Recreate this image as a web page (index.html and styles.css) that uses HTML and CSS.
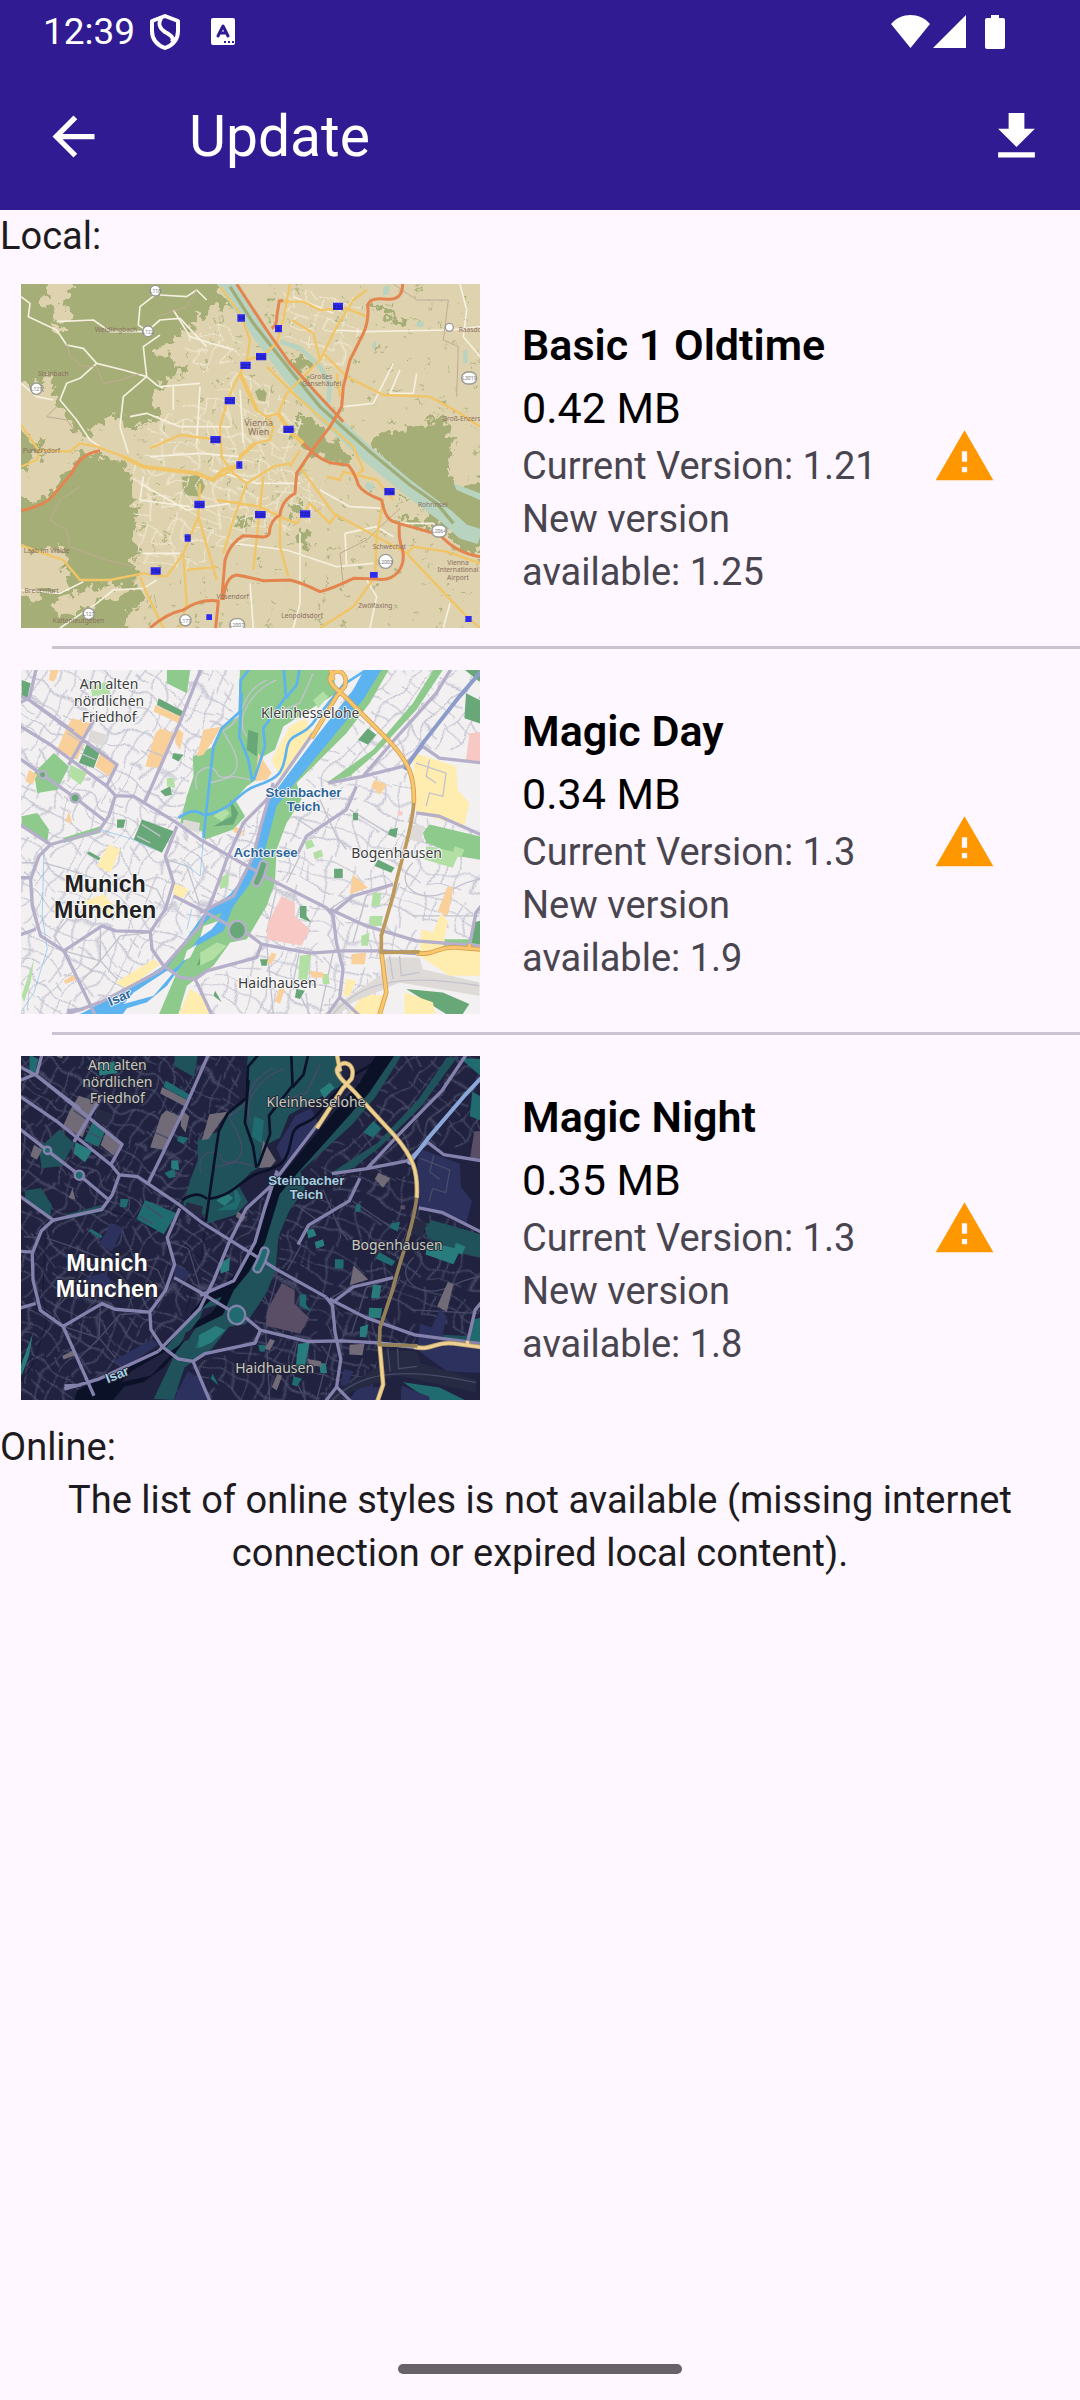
FILE: index.html
```html
<!DOCTYPE html>
<html lang="en">
  <head>
    <meta charset="UTF-8" />
    <meta name="viewport" content="width=device-width, initial-scale=1" />
    <title>Update</title>
    <link rel="stylesheet" href="styles.css">
  </head>
  <body>
    <header class="top">
      <!-- Status bar -->
      <div class="status-bar">
        <div class="status-left">
          <span class="clock">12:39</span>
          <svg class="status-shield" viewBox="0 0 30 36" aria-hidden="true">
            <path d="M15 2 L28 7 V17 C28 25 23 31 15 34 C7 31 2 25 2 17 V7 Z M11 4 C8 10 9 14 15 18 C22 22 24 24 22 28" />
          </svg>
          <svg class="status-app" viewBox="0 0 24 27" aria-hidden="true">
            <rect width="24" height="27" rx="2" fill="#fff" />
            <path d="M7 18 L12 8 L17 18 M9 15 H15" fill="none" stroke="#311b92" stroke-width="3" stroke-linecap="round" stroke-linejoin="round" />
            <path d="M13 23h2v2h-2z M17 23h2v2h-2z M21 23h2v2h-2z" fill="#311b92" />
          </svg>
        </div>
        <div class="status-right">
          <svg class="status-wifi" viewBox="0 0 39 33" aria-hidden="true">
            <path d="M0 9 C10 -3 29 -3 39 9 L19.500 33 Z" />
          </svg>
          <svg class="status-signal" viewBox="0 0 33 33" aria-hidden="true">
            <path d="M33 0 V33 H0 Z" />
          </svg>
          <svg class="status-battery" viewBox="0 0 20 34" aria-hidden="true">
            <path d="M6 0 H14 V3 H18 Q20 3 20 5 V32 Q20 34 18 34 H2 Q0 34 0 32 V5 Q0 3 2 3 H6 Z" />
          </svg>
        </div>
      </div>

      <!-- App bar -->
      <div class="app-bar">
        <button class="icon-button" type="button" aria-label="Back">
          <svg class="icon" viewBox="0 0 24 24" aria-hidden="true">
            <path d="M20 11H7.830l5.590-5.590L12 4l-8 8 8 8 1.410-1.410L7.830 13H20v-2z" />
          </svg>
        </button>
        <h1>Update</h1>
        <button class="icon-button" type="button" aria-label="Download all">
          <svg class="icon" viewBox="0 0 24 24" aria-hidden="true">
            <path d="M19 9h-4V3H9v6H5l7 7 7-7zM5 18v2h14v-2H5z" />
          </svg>
        </button>
      </div>
    </header>

    <main>
      <h2 class="section-title">Local:</h2>
      <ul class="style-list">
        <!-- Basic 1 Oldtime -->
        <li class="style-item">
          <svg class="map map-old" viewBox="63 42 1377 1032" role="img" aria-label="Map of Vienna">
            <defs>
              <pattern id="lanes" width="94" height="78" patternUnits="userSpaceOnUse" patternTransform="rotate(12)">
                <path d="M0 20 H60 L94 32 M22 0 V44 L30 78 M60 20 V58 H94 M0 60 H26" />
              </pattern>
              <pattern id="groves" width="170" height="130" patternUnits="userSpaceOnUse" patternTransform="rotate(-20)">
                <path d="M20 20h14v5h-14z M90 40h5v16h-5z M130 90h18v6h-18z M50 100h8v8h-8z M150 20h6v6h-6z M70 70h5v5h-5z" />
              </pattern>
              <!-- Roughens straight edges -->
              <filter id="ragged" x="0" y="0" width="1" height="1" color-interpolation-filters="sRGB">
                <feTurbulence type="fractalNoise" baseFrequency=".035" numOctaves="3" seed="4" />
                <feDisplacementMap in="SourceGraphic" scale="70" xChannelSelector="R" yChannelSelector="G" />
              </filter>
              <filter id="bent" x="0" y="0" width="1" height="1" color-interpolation-filters="sRGB">
                <feTurbulence type="fractalNoise" baseFrequency=".008" numOctaves="2" seed="9" />
                <feDisplacementMap in="SourceGraphic" scale="90" xChannelSelector="R" yChannelSelector="G" />
              </filter>
            </defs>
            <rect class="land" x="63" y="42" width="1377" height="1032" />
            <g filter="url(#ragged)">
              <path class="forest" d="M20 0 H120 L140 70 128 95 175 120 205 135 200 80 225 42 V0 H640 L655 70 690 95 680 120 640 105 610 130 575 165 540 175 545 205 500 220 470 240 480 260 530 265 525 295 560 290 540 320 480 330 490 355 460 370 455 405 480 430 470 455 400 465 375 480 365 440 340 425 320 460 280 470 265 500 225 490 190 430 160 400 155 320 145 300 130 350 100 340 20 345 Z" />
              <path class="forest" d="M20 480 L63 480 90 510 120 520 115 550 180 560 230 540 290 560 380 575 370 600 395 620 385 660 410 700 400 720 410 760 400 800 410 850 395 880 420 910 400 950 440 975 420 1000 390 1020 360 1120 H20 V985 L100 990 130 960 210 950 215 920 190 890 200 840 150 830 110 840 20 820 V700 L130 690 120 660 90 640 85 600 20 590 Z" />
              <path class="land" d="M20 715 L140 690 190 620 225 580 240 545 200 545 115 560 85 590 90 650 100 700 Z M170 110 L205 125 210 150 175 185 150 150 Z M160 1000 L235 960 340 945 400 950 360 975 290 990 270 1020 180 1040 Z" />
              <path class="forest" d="M1160 480 L1190 490 1210 475 1240 480 1270 455 1310 445 1345 460 1355 540 1340 600 1370 640 1500 640 V850 L1380 830 1330 780 1290 760 1270 700 1200 620 1150 570 1110 530 Z M890 440 L940 450 975 480 1000 520 1050 560 1045 585 990 575 930 540 880 500 Z M865 270 L900 255 935 275 915 300 885 295 Z M890 790 L920 785 935 830 905 840 Z M1110 90 L1150 110 1210 160 1190 165 1120 110 Z M705 740 L750 735 755 765 715 770 Z M870 700 L910 690 905 730 880 740 Z M1195 680 L1230 690 1215 705 Z M1180 740 L1260 750 1310 790 1270 780 Z" />
              <rect fill="url(#groves)" x="400" y="42" width="1040" height="1032" />
            </g>
            <path class="forest" d="M545 620 L600 615 615 650 600 680 550 675 Z M765 365 L785 350 800 370 795 395 775 390 Z" />
            <g class="lanes" filter="url(#bent)">
              <path d="M470 440 L640 380 700 330 800 340 900 440 880 560 980 640 960 740 800 800 660 850 540 900 430 870 400 740 400 600 450 540 Z" />
              <path d="M560 180 L690 150 740 240 700 300 560 300 Z M840 60 L1100 60 1080 200 1010 300 930 230 850 200 Z" />
            </g>
            <path class="minor" d="M63 80 L90 100 85 140 170 180 200 225 250 235 290 280 240 325 200 340 180 390 230 450 270 510 300 530 M290 280 L370 300 440 320 470 345 490 355 M445 185 L415 165 420 110 465 75 M170 155 L280 150 330 185 440 185 M440 185 L480 150 540 145 620 230 M63 340 L110 380 160 390 M360 470 L370 380 440 320 430 230 480 195 M360 470 L385 550 M480 75 L560 80 590 60 620 90 M63 960 L180 970 250 935 M180 1074 L290 1000 340 960 430 955 470 930" />
            <path class="minor" d="M390 440 L440 430 540 470 690 470 M450 560 L600 550 720 560 M420 640 L560 720 690 700 M720 360 L730 520 M600 350 L590 520 M640 600 L770 640 900 640 M960 660 L1050 710 1150 715 M700 820 L860 840 1010 890 1120 880 M900 790 L900 1000 880 1074 M750 940 L760 1074 M1100 930 L1130 980 1110 1074 M1000 180 L1100 185 1350 180 1440 170 M1380 42 L1400 120 1390 200 1440 260 M1200 300 L1170 370 1240 370 1250 310 M1030 410 L1120 400 1180 280 M880 80 L1000 130 M1350 1000 L1330 1074 M1040 890 L1035 790 1130 770 1180 800 M1180 760 L1300 760 1320 790 M430 850 L540 850 M430 620 L420 690 570 710 M520 120 L570 200 700 240 M520 350 L520 420 M480 350 L600 340" />
            <path class="border-line" d="M590 60 L560 110 470 140 M200 220 L210 260 250 290 290 290 310 340 360 330 420 310 M180 400 L140 440 200 450 230 490 M240 650 L180 690 150 750 200 780 210 830 320 870 400 890 M1180 42 L1250 90 1345 90 1330 210 1375 230 1370 380 M1020 850 L1030 950 M1200 715 L1100 810 1020 850" />

            <!-- Danube -->
            <path class="danube" d="M670 30 L750 150 860 300 960 420 1100 550 1220 650 1340 740 1390 785 1440 800" />
            <path class="danube-island" d="M690 50 L760 160 870 300 960 410 1110 545 1230 645 1310 700 1360 760" />
            <path class="danube-arm" d="M840 215 L900 235 960 290 990 340 985 400" />
            <path class="water" d="M1150 50 L1170 45 1165 75 1150 75 Z M1115 225 L1125 210 1130 220 1120 240 Z M1100 635 L1125 645 1110 665 1095 650 Z M1250 155 h20 v15 h-20 Z M1390 240 h12 v40 h-12 Z M1360 640 L1440 670 1440 690 1370 660 Z" />

            <!-- Main roads -->
            <path class="major" d="M660 50 L720 130 750 210 740 270 720 310 750 370 770 420 800 440 835 430 M720 310 L700 350 680 400 660 470 665 560 700 610 740 640 820 590 870 580 M740 270 L790 255 830 220 850 150 870 42 M835 430 L860 370 960 270 1010 170 1060 90 1100 60 M960 270 L940 190 875 150 M850 95 L910 95 960 120 1040 115 1100 140 M970 250 L1040 320 1150 375 1290 380 1380 430 1440 470 M800 290 L880 370 1060 530 1090 600 1060 620 M63 465 L115 540 210 545 240 520 290 530 370 560 M450 535 L540 495 660 510 M800 440 L820 470 810 510 765 520 720 560 715 590 660 620 M600 640 L595 740 550 850 500 920 430 910 M595 740 L650 930 M650 690 L780 710 840 740 890 760 930 700 990 760 1010 730 M780 710 L790 620 M780 710 L760 900 M740 640 L700 750 670 850 M840 740 L840 830 865 920 M560 900 L650 890 M550 850 L560 1000 540 1074 M420 920 L440 970 490 1074 M63 825 L130 850 190 870 240 930 330 930 430 910 M900 590 L1000 730 1130 800 1220 850 1400 1040 1440 1074 M1220 850 L1240 830 1340 845 1440 880 M1150 690 L1130 800 1125 920 1060 1010 960 1074 M63 590 L110 570 120 540 M900 540 L870 590 M980 620 L1020 630 1030 605 1130 630 1180 690 M1020 380 L1010 310" />
            <path class="major major-wide" d="M370 560 L430 590 590 610 640 630 670 600 720 585 M835 430 L865 480 910 520 M720 310 L770 420 M765 520 L720 560" />
            <path class="motorway" d="M710 42 L800 180 870 280 950 370 1030 455 M1208 42 Q1208 90 1165 88 Q1110 80 1103 105 Q1108 150 1090 190 L1050 270 1030 350 1025 410 990 470 930 550 890 610 885 670 Q845 690 840 735 Q810 750 808 790 Q805 800 790 801 L730 797 Q690 820 675 870 L665 990 M910 520 Q950 565 990 578 L1045 586 Q1065 610 1075 645 Q1090 670 1145 690 Q1155 750 1185 757 L1250 775 1320 795 Q1370 850 1440 860 M1198 765 Q1195 810 1208 840 Q1215 880 1195 905 Q1170 935 1130 927 L1060 925 Q1000 955 960 965 Q910 940 870 930 L790 932 Q740 920 710 915 Q675 920 670 990 M450 1074 Q500 1030 550 1020 Q600 985 655 993 L647 1074 M63 722 Q140 705 160 675 L215 610 Q240 550 300 542 M815 175 Q832 165 830 140 L838 92 850 92" />

            <g class="shield">
              <circle cx="466" cy="62" r="16" /><circle cx="444" cy="184" r="16" />
              <circle cx="109" cy="356" r="17" /><circle cx="1348" cy="172" r="12" />
              <rect x="1385" y="306" width="45" height="36" rx="18" />
              <rect x="1295" y="765" width="45" height="36" rx="18" />
              <circle cx="1157" cy="874" r="21" /><circle cx="266" cy="1031" r="17" />
              <circle cx="556" cy="1051" r="17" />
              <rect x="689" y="1046" width="45" height="36" rx="18" />
            </g>
            <g class="shield-text">
              <text x="466" y="69">L118</text><text x="444" y="191">L122</text>
              <text x="109" y="363">L121</text><text x="1408" y="331">L3019</text>
              <text x="1317" y="790">L2064</text><text x="1157" y="881">L2003</text>
              <text x="266" y="1038">L127</text><text x="556" y="1058">L177</text>
              <text x="711" y="1071">L2007</text>
            </g>
            <path class="badge" d="M712 133h23v22h-23z M825 165h21v22h-21z M999 98h30v22h-30z M768 249h31v22h-31z M721 275h31v22h-31z M674 381h31v22h-31z M850 467h31v22h-31z M631 498h31v22h-31z M709 574h18v22h-18z M583 692h31v23h-31z M765 723h32v22h-32z M900 721h31v22h-31z M1153 654h31v22h-31z M554 793h18v22h-18z M452 892h30v22h-30z M1110 906h23v17h-23z M619 1033h17v17h-17z M1396 1038h19v18h-19z" />
            <g class="badge-text">
              <text x="724" y="151">14</text><text x="835" y="183">3</text><text x="1014" y="116">226</text>
              <text x="783" y="267">226</text><text x="737" y="293">227</text><text x="689" y="399">221</text>
              <text x="865" y="485">227</text><text x="646" y="516">223</text><text x="718" y="592">1</text>
              <text x="598" y="711">224</text><text x="781" y="741">230</text><text x="915" y="739">225</text>
              <text x="1168" y="672">14a</text><text x="563" y="811">12</text><text x="467" y="910">13a</text>
            </g>
            <g class="old-label">
              <text x="348" y="185">Weidlingbach</text>
              <text x="160" y="317">Steinbach</text>
              <text x="124" y="550">Purkersdorf</text>
              <text x="140" y="849">Laab im Walde</text>
              <text x="125" y="968">Breitenfurt</text>
              <text x="236" y="1060">Kaltenleutgeben</text>
              <text x="963" y="328">Großes</text>
              <text x="965" y="348">Gänsehäufel</text>
              <text x="1418" y="186">Raasdorf</text>
              <text x="1404" y="452">Groß-Enzersdorf</text>
              <text x="1298" y="712">Rohrinsel</text>
              <text x="1168" y="836">Schwechat</text>
              <text x="1374" y="884">Vienna</text>
              <text x="1374" y="907">International</text>
              <text x="1374" y="929">Airport</text>
              <text x="1126" y="1013">Zwölfaxing</text>
              <text x="906" y="1043">Leopoldsdorf</text>
              <text x="698" y="988">Vösendorf</text>
            </g>
            <g class="old-city">
              <text x="776" y="467">Vienna</text>
              <text x="776" y="494">Wien</text>
            </g>
          </svg>
          <div class="style-info">
            <h3>Basic 1 Oldtime</h3>
            <p class="size">0.42 MB</p>
            <p class="version">Current Version: 1.21</p>
            <p class="version">New version available: 1.25</p>
          </div>
          <button class="update-button" type="button" aria-label="Update Basic 1 Oldtime">
            <svg class="icon" viewBox="0 0 24 24" aria-hidden="true">
              <path d="M1 21h22L12 2 1 21zm12-3h-2v-2h2v2zm0-4h-2v-4h2v4z" />
            </svg>
          </button>
        </li>

        <!-- Magic Day -->
        <li class="style-item">
          <svg class="map map-day" viewBox="63 60 1377 1035" role="img" aria-label="Day map of Munich">
            <defs>
              <pattern id="grid-west" width="130" height="112" patternUnits="userSpaceOnUse" patternTransform="rotate(31)">
                <path d="M0 14 H130 M0 58 H74 L130 68 M0 92 H50 M18 0 V112 M60 14 V112 M100 0 V64 M100 64 L112 112" />
              </pattern>
              <pattern id="grid-east" width="124" height="140" patternUnits="userSpaceOnUse" patternTransform="rotate(18)">
                <path d="M0 20 H80 L124 34 M0 68 H124 M0 108 H58 M24 0 V68 L34 140 M78 0 V108 H124 M104 34 V108" />
              </pattern>
              <pattern id="grid-north" width="116" height="96" patternUnits="userSpaceOnUse" patternTransform="rotate(-48)">
                <path d="M0 14 H116 M0 56 H116 M20 0 V56 M66 14 V96 M96 56 V96" />
              </pattern>

              <!-- Munich, drawn once and coloured by the map it is used in -->
              <g id="munich">
                <rect class="m-land" x="0" y="0" width="1500" height="1160" />
                <g class="m-streets" filter="url(#bent)">
                  <path fill="url(#grid-west)" d="M0 0 H730 L700 220 640 290 575 330 550 490 640 560 760 480 800 500 740 680 560 880 500 950 250 1160 H0 Z" />
                  <path fill="url(#grid-north)" d="M1130 0 H1500 V330 L1250 290 1200 350 940 420 900 390 Z" />
                  <path fill="url(#grid-east)" d="M900 450 L1080 390 1230 360 1240 480 1500 560 V900 L1150 920 780 880 740 860 820 700 830 580 Z M590 990 L780 890 1140 920 1150 1160 H500 Z" />
                </g>
                <path class="m-lanes" d="M63 640 L110 640 M130 640 L200 660 290 690 M190 905 L160 860 210 800 M190 905 L300 935 360 860 450 850 M300 935 L240 1000 M300 935 L300 830 M300 935 L350 990 M500 630 L560 650 600 770 M420 700 L470 720 500 780 M960 450 L1010 560 1040 600 M900 620 L860 700 M1050 480 L1180 560 M1240 640 C1190 690 1230 740 1290 740 S1370 700 1440 690 M1200 700 L1140 860 M1060 880 L1100 740 1170 710 M1240 800 L1440 800 M940 540 L880 500 M990 780 L1050 740 1170 710 M830 720 L800 850 M870 760 L880 890 M900 900 L880 1000 930 1095 M800 880 L820 1095 M1000 910 L960 1095" />

                <!-- Areas -->
                <path class="m-park" d="M722 30 H995 L1010 130 960 160 850 230 825 300 790 320 770 390 740 410 705 450 735 500 700 540 615 570 605 545 540 520 560 440 580 380 578 320 640 290 665 230 715 200 718 95 Z" />
                <path class="m-park" d="M1130 20 H1190 L1110 160 1040 250 950 340 890 400 905 450 860 520 830 600 825 700 800 770 740 870 690 880 640 950 560 1010 530 1110 470 1110 560 900 690 740 760 640 800 480 870 390 1000 220 Z" />
                <path class="m-park" d="M1270 550 L1290 525 1440 560 1500 580 V640 L1380 620 1280 580 Z M100 370 L160 310 205 350 170 420 110 430 Z M63 500 L110 490 145 540 140 580 63 525 Z M190 565 L300 530 300 550 190 580 Z M500 60 H570 L560 130 500 100 Z M1320 30 H1350 L1250 180 1130 310 1050 380 980 400 1120 300 1240 160 Z M1335 870 H1440 V890 H1335 Z" />
                <path class="m-wood" d="M425 510 L520 545 485 610 400 570 Z M235 340 L260 280 300 300 280 355 Z M475 145 L550 185 540 200 470 165 Z M1400 130 L1500 180 V240 L1395 205 Z M1360 30 H1470 L1440 95 Z M1075 270 L1105 235 1130 255 1105 285 Z M745 240 L775 250 770 320 740 300 Z M640 530 L695 500 690 450 715 490 700 525 Z M1220 1020 L1330 1030 1410 1065 1390 1095 1340 1095 Z M1420 820 L1500 800 V900 L1415 880 Z M1135 630 L1185 655 1175 670 1125 650 Z M63 90 L90 100 80 145 63 145 Z M1003 658 h26 v28 h-26 Z M1170 540 L1195 535 1190 565 1165 555 Z M520 310 L550 315 535 335 515 325 Z M480 425 L510 410 515 435 495 440 Z M595 850 L620 845 605 875 585 875 Z M520 940 L575 880 560 930 530 960 Z M610 900 L620 940 590 950 Z M780 930 L805 930 800 950 785 950 Z M645 1025 L665 1060 640 1040 Z M890 1020 L915 1025 900 1050 885 1045 Z M900 770 L920 770 920 800 935 820 900 805 Z M1060 490 h15 v22 h-15 Z M350 510 l25 0 -5 25 -20 0 Z M265 605 l35 20 -5 8 -35 -20 Z" />
                <path class="m-lawn" d="M270 110 L320 95 330 130 275 140 Z M210 345 L260 370 240 405 205 380 Z M940 150 L970 125 985 140 955 175 Z M640 500 L670 475 690 490 665 515 Z M915 575 L935 570 945 590 920 600 Z M940 610 L965 600 970 620 945 630 Z M1280 590 L1380 610 1360 655 1275 630 Z M1365 590 L1395 600 1385 625 1360 615 Z M900 920 L935 915 920 1000 895 990 Z M1085 860 L1110 850 1105 890 1085 890 Z M1110 800 L1150 800 1145 830 1110 830 Z M1120 730 L1145 730 1140 770 1115 770 Z M63 1040 L100 930 90 1000 70 1060 Z M655 690 L685 670 685 710 660 720 Z M500 385 L520 385 525 415 500 410 Z M965 975 l20 0 5 30 -20 0 Z M600 910 L650 880 680 890 640 930 600 950 Z" />
                <path class="m-yellow" d="M1245 310 L1370 350 1375 420 1410 460 1395 530 1250 490 1240 400 Z M870 230 L915 205 940 250 880 340 840 380 815 330 Z M325 585 L360 600 330 670 290 650 Z M1265 840 L1300 850 1325 790 1345 815 1330 895 1500 905 V980 L1350 980 1260 920 Z M345 1000 L460 930 480 945 380 1020 Z M570 1020 L620 1050 640 1110 530 1110 Z M1090 1035 L1155 1040 1140 1110 1040 1110 Z M1215 1030 L1300 1060 1310 1110 1215 1110 Z M1040 990 L1070 995 1050 1040 1030 1040 Z M520 700 L565 720 550 745 520 740 Z M240 760 L310 735 340 770 330 800 300 780 Z" />
                <path class="m-orange" d="M190 250 L215 205 270 220 230 330 170 300 Z M300 310 L345 345 325 380 285 350 Z M465 250 L480 235 520 250 480 355 435 350 Z M465 165 L540 200 535 220 460 185 Z M610 240 L665 230 610 315 590 320 Z M150 60 L175 60 160 95 145 90 Z M525 230 L550 250 540 300 525 280 Z M85 360 L110 375 95 405 75 395 Z M775 310 L815 370 800 390 765 395 Z M1125 390 L1162 405 1140 435 1115 410 Z M1060 675 L1105 715 1050 735 Z M1345 710 L1362 715 1345 800 1315 785 Z M1055 915 L1100 910 1095 945 1055 945 Z M815 910 L830 915 815 945 800 940 Z M840 1015 L855 1020 840 1065 825 1055 Z M930 965 L970 970 975 985 935 985 Z M205 485 L215 520 195 515 Z M705 530 L730 545 720 560 700 545 Z M190 995 L225 975 230 990 195 1005 Z" />
                <path class="m-pink" d="M845 740 L885 760 885 800 930 840 905 890 800 870 805 820 Z M1410 250 L1500 240 V340 L1400 330 Z M1195 485 h14 v12 h-14 Z" />
                <path class="m-grey" d="M1230 525 L1275 530 1265 580 1230 570 Z M270 240 L320 255 305 290 265 275 Z M1160 925 H1260 L1270 960 1440 1000 V1040 L1200 1000 1060 1060 1000 1110 H950 L1050 1040 1140 980 Z M550 510 L600 520 595 550 545 535 Z" />
                <path class="m-lanes" d="M410 560 L450 580 M425 525 L480 560 M1250 340 L1340 370 1330 440 1290 430 1280 470 M1290 330 L1280 380 1310 400 M1000 1095 C1080 1000 1200 970 1440 1010 M1170 920 L1180 990 M1200 920 L1205 980 1260 970 M590 420 C570 350 640 340 650 370 S740 380 700 300 660 260 700 220 720 130 800 90 M830 90 C760 120 700 200 740 260 M940 70 L900 160 850 180 M630 400 L700 380 750 390 M240 310 L285 330 M440 300 L490 320 M200 250 L240 275" />

                <!-- Isar and its streams -->
                <path class="m-water" d="M1115 20 L1060 120 950 260 860 380 800 460 770 590 735 680 690 735 610 795 550 880 490 950 380 1020 240 1095 230 1130 H340 L380 1078 440 1060 500 1010 550 940 590 890 670 845 700 770 745 710 790 620 830 470 885 400 980 285 1090 150 1170 20 Z" />
                <path class="m-park" d="M570 865 L630 805 665 790 650 820 600 860 540 945 515 965 500 955 Z" />
                <path class="m-land" d="M400 1030 L500 965 520 970 460 1040 370 1065 Z M610 830 L655 815 635 840 600 865 Z M560 905 L590 885 570 925 550 935 Z" />
                <path class="m-stream" d="M770 30 L722 90 720 185 665 235 640 290 630 380 618 490 610 565 M850 30 L858 140 790 235 795 290 762 390 M905 30 L890 105 858 145 M725 130 L718 260 745 330 757 395 M615 497 C700 480 710 430 765 410 C840 385 850 370 860 300 C870 240 910 270 950 205 L1030 105 1100 60 M535 505 C570 480 590 480 612 497" />
                <path class="m-brook" d="M130 600 L125 800 140 900 100 1030 60 1090 M300 540 L400 570 460 600 M610 565 L600 680 550 640 M575 780 L560 840" />

                <!-- Main roads -->
                <g class="m-road">
                  <path d="M20 205 L150 285 320 410 345 438 400 440 530 520 600 570 760 660 830 700 980 775 M20 120 L85 150 350 345 320 405 M85 150 L120 0 M85 145 L20 175 M85 150 L220 245 M280 210 L205 345 M20 300 L125 375 225 445 315 515 M625 0 L540 215 430 465 M345 438 L325 500 295 545 150 585 115 620 90 690 95 770 120 860 190 905 305 830 345 845 450 848 495 780 520 700 495 620 530 530 M20 500 L150 585 M190 905 L290 1110 M20 870 L105 840 M450 848 L455 900 490 950 540 985 585 990 620 965 770 925 785 885 M20 685 H95 M585 990 L650 1130 M520 740 L600 780 700 835 M480 965 L300 1060 200 1095 M250 1080 L200 1085" />
                  <path d="M480 965 L600 830 640 740 680 630 730 520 800 450 940 250 M600 790 L700 740 760 620 785 520 820 400 M740 850 L785 885 930 912 1030 905 1150 905 1270 915 M980 775 L1000 800 1010 880 1030 960 1020 1045 960 1130 M1020 1045 L1090 1110 M990 780 L1100 830 1250 875 1500 895 M1000 790 L1060 740 1180 705 M985 400 L1090 380 1210 350 1270 290 1320 325 1500 345 M1090 380 L1180 275 1310 130 1390 0 M1250 490 L1320 500 1500 580 M1500 700 L1430 790 1410 890 M890 620 L920 560 1040 480 1070 410" />
                </g>
                <path class="m-roundabout" d="M210 445 a14 14 0 1 0 28 0 a14 14 0 1 0 -28 0 M115 375 a11 11 0 1 0 22 0 a11 11 0 1 0 -22 0 M686 843 a26 28 0 1 0 52 0 a26 28 0 1 0 -52 0 M780 640 a12 12 0 0 1 22 6 L792 680 780 705 a12 12 0 0 1 -22 -8 L770 670 Z" />
                <path class="m-blue-road" d="M1500 0 L1380 140 1270 280 1215 360 M1150 908 L1260 910" />
                <path class="m-motor-case" d="M935 265 L1010 140 1035 110 C1050 60 1000 50 990 85 C990 110 1030 130 1060 165 L1170 275 C1230 340 1245 380 1243 460 M980 0 L1000 90 M1145 905 L1160 1030 1130 1130 M1250 912 C1310 920 1310 890 1370 895 L1500 905 M1410 885 V898" />
                <path class="m-motor" d="M935 265 L1010 140 1035 110 C1050 60 1000 50 990 85 C990 110 1030 130 1060 165 L1170 275 C1230 340 1245 380 1243 460 M980 0 L1000 90 M1145 905 L1160 1030 1130 1130 M1250 912 C1310 920 1310 890 1370 895 L1500 905 M1410 885 V898" />
                <path class="m-tunnel" d="M1243 460 C1235 560 1200 640 1180 740 L1145 860 V910 L1260 908" />
              </g>
            </defs>
            <use href="#munich" />
            <g class="map-label">
              <text x="326" y="116">Am alten</text>
              <text x="326" y="167">nördlichen</text>
              <text x="326" y="217">Friedhof</text>
              <text x="931" y="205">Kleinhesselohe</text>
              <text x="1191" y="627">Bogenhausen</text>
              <text x="832" y="1018">Haidhausen</text>
            </g>
            <g class="map-water-label">
              <text x="911" y="441">Steinbacher</text>
              <text x="911" y="485">Teich</text>
              <text x="797" y="624">Achtersee</text>
              <text x="358" y="1058" transform="rotate(-24 358 1046)">Isar</text>
            </g>
            <g class="map-city">
              <text x="314" y="729">Munich</text>
              <text x="314" y="807">München</text>
            </g>
          </svg>
          <div class="style-info">
            <h3>Magic Day</h3>
            <p class="size">0.34 MB</p>
            <p class="version">Current Version: 1.3</p>
            <p class="version">New version available: 1.9</p>
          </div>
          <button class="update-button" type="button" aria-label="Update Magic Day">
            <svg class="icon" viewBox="0 0 24 24" aria-hidden="true">
              <path d="M1 21h22L12 2 1 21zm12-3h-2v-2h2v2zm0-4h-2v-4h2v4z" />
            </svg>
          </button>
        </li>

        <!-- Magic Night -->
        <li class="style-item">
          <svg class="map map-night" viewBox="63 51 1377 1032" role="img" aria-label="Night map of Munich">
            <g transform="translate(63 51) matrix(.994 .052 -.032 .99 27 -32) translate(-63 -60)">
              <use href="#munich" />
            </g>
            <g class="map-label">
              <text x="352" y="93">Am alten</text>
              <text x="352" y="144">nördlichen</text>
              <text x="352" y="193">Friedhof</text>
              <text x="948" y="205">Kleinhesselohe</text>
              <text x="1191" y="633">Bogenhausen</text>
              <text x="824" y="1003">Haidhausen</text>
            </g>
            <g class="map-water-label">
              <text x="919" y="437">Steinbacher</text>
              <text x="919" y="480">Teich</text>
              <text x="352" y="1020" transform="rotate(-22 352 1008)">Isar</text>
            </g>
            <g class="map-city">
              <text x="321" y="696">Munich</text>
              <text x="321" y="773">München</text>
            </g>
          </svg>
          <div class="style-info">
            <h3>Magic Night</h3>
            <p class="size">0.35 MB</p>
            <p class="version">Current Version: 1.3</p>
            <p class="version">New version available: 1.8</p>
          </div>
          <button class="update-button" type="button" aria-label="Update Magic Night">
            <svg class="icon" viewBox="0 0 24 24" aria-hidden="true">
              <path d="M1 21h22L12 2 1 21zm12-3h-2v-2h2v2zm0-4h-2v-4h2v4z" />
            </svg>
          </button>
        </li>
      </ul>

      <h2 class="section-title">Online:</h2>
      <p class="message">The list of online styles is not available (missing internet connection or expired local content).</p>
    </main>

    <footer class="nav-bar"><div class="nav-handle"></div></footer>
  </body>
</html>
```
FILE: styles.css
```css
* {
  box-sizing: border-box;
}

body {
  margin: 0;
  min-height: 100vh;
  display: flex;
  flex-direction: column;
  font-family: Roboto, sans-serif;
  font-size: 38px;
  line-height: 53px;
  color: #1d1b20;
  background: #fef7ff;
}

h1,
h2,
h3,
p,
ul {
  margin: 0;
  padding: 0;
}

svg {
  display: block;
}

button {
  padding: 0;
  border: none;
  background: none;
  cursor: pointer;
}

/* Header */
.top {
  background: #311b92;
  color: #fff;
}

.status-bar {
  height: 63px;
  padding: 0 75px 0 43px;
  display: flex;
  justify-content: space-between;
  align-items: center;
}

.status-left,
.status-right {
  display: flex;
  align-items: center;
}

.clock {
  font-size: 37px;
  line-height: 63px;
}

.status-shield {
  width: 30px;
  height: 36px;
  margin-left: 15px;
  fill: none;
  stroke: #fff;
  stroke-width: 4;
  stroke-linejoin: round;
}

.status-app {
  width: 24px;
  height: 27px;
  margin-left: 31px;
}

.status-right {
  fill: #fff;
}

.status-wifi {
  width: 39px;
  height: 33px;
}

.status-signal {
  width: 33px;
  height: 33px;
  margin-left: 3px;
}

.status-battery {
  width: 20px;
  height: 34px;
  margin-left: 19px;
}

.app-bar {
  height: 147px;
  padding: 0 32px 0 42px;
  display: flex;
  align-items: center;
}

.app-bar h1 {
  flex: 1;
  margin-left: 84px;
  font-size: 57px;
  font-weight: 400;
  line-height: 74px;
}

.icon {
  width: 63px;
  height: 63px;
}

.icon-button {
  fill: #fff;
}

/* Style list */
main {
  flex: 1;
}

.section-title {
  font-size: 38px;
  font-weight: 400;
}

.style-list {
  list-style: none;
}

.style-item {
  display: flex;
  align-items: center;
  padding: 21px 53px 21px 21px;
}

/* divider starts further in than the thumbnail */
.style-item:not(:last-child) {
  background: linear-gradient(#cac4d0, #cac4d0) 52px 100% / 100% 3px no-repeat;
}

.map {
  flex: 0 0 459px;
  height: 344px;
}

.style-info {
  flex: 1;
  margin: 0 20px 0 42px;
}

.style-info h3,
.size {
  font-size: 43px;
  line-height: 63px;
  color: #000;
}

.style-info h3 {
  font-weight: 600;
}

.version {
  color: #49454f;
}

.update-button {
  flex: 0 0 126px;
  height: 126px;
  display: flex;
  align-items: center;
  justify-content: center;
  fill: #ff9800;
}

.message {
  padding: 0 42px;
  text-align: center;
}

.nav-bar {
  padding: 26px 0;
}

.nav-handle {
  width: 284px;
  height: 10px;
  margin: 0 auto;
  border-radius: 5px;
  background: #666267;
}

/* Vienna map */
.map-old {
  fill: none;
  stroke-linejoin: round;
}

.land {
  fill: #dfd2ae;
}

.forest,
#groves path {
  fill: #a5ae77;
}

#lanes path {
  fill: none;
  stroke: #eee6cf;
  stroke-width: 4;
}

.lanes {
  fill: url(#lanes);
}

.minor {
  stroke: #f5f0df;
  stroke-width: 5;
}

.border-line {
  stroke: #c0ab95;
  stroke-width: 3;
}

.danube {
  stroke: #b8d3c0;
  stroke-width: 46;
}

.danube-island {
  stroke: #a0ad78;
  stroke-width: 10;
}

.danube-arm {
  stroke: #b8d3c0;
  stroke-width: 14;
}

.water {
  fill: #b8d3c0;
}

.major {
  stroke: #f1c566;
  stroke-width: 7;
}

.major-wide {
  stroke-width: 12;
}

.motorway {
  stroke: #e4854f;
  stroke-width: 9;
}

.shield {
  fill: #fff;
  stroke: #9a9a94;
  stroke-width: 4;
}

.shield-text,
.badge-text,
.old-label,
.old-city,
.map-label,
.map-water-label,
.map-city {
  text-anchor: middle;
}

.shield-text {
  font-size: 15px;
  fill: #777;
}

.badge {
  fill: #2e2af2;
}

.badge-text {
  font-size: 17px;
  fill: #17157a;
}

.old-label,
.old-city {
  font-family: "Noto Sans", sans-serif;
  font-size: 20px;
  fill: #8b7163;
}

.old-city {
  font-size: 27px;
}

/* Munich maps */
.map-day {
  --land: #f2f0f1;
  --park: #8dca8c;
  --wood: #68a878;
  --lawn: #b2dfa3;
  --yellow: #ffedb0;
  --orange: #fad09a;
  --pink: #f7c8c4;
  --grey: #dedad7;
  --lane: #c3c3ce;
  --water: #5db3f0;
  --road: #b5afca;
  --blue-road: #8b9ccb;
  --motor: #f9c66e;
  --motor-case: #d3a052;
  --tunnel: #bd9a5c;
  --label: #3a3a3a;
  --halo: #ffffff;
  --water-label: #2c6499;
  --city: #222222;
}

.map-night {
  --land: #20223f;
  --park: #20525b;
  --wood: #1f6b70;
  --lawn: #287c7c;
  --yellow: #2c315d;
  --orange: #716b78;
  --pink: #5a4e66;
  --grey: #272a43;
  --lane: #484b68;
  --water: #0b1228;
  --road: #8481ad;
  --blue-road: #8ba8d9;
  --motor: #efd193;
  --motor-case: #b89d65;
  --tunnel: #94815a;
  --label: #c9c9c4;
  --halo: #20222e;
  --water-label: #a4cfe5;
  --city: #ffffff;
}

#munich {
  fill: none;
  stroke-linejoin: round;
}

.m-land {
  fill: var(--land);
}

#grid-west path,
#grid-east path,
#grid-north path {
  fill: none;
  stroke: #8889a8;
  stroke-width: 4;
  stroke-opacity: 0.4;
}

.m-lanes {
  stroke: var(--lane);
  stroke-width: 4;
}

.m-park {
  fill: var(--park);
}

.m-wood {
  fill: var(--wood);
}

.m-lawn {
  fill: var(--lawn);
}

.m-yellow {
  fill: var(--yellow);
}

.m-orange {
  fill: var(--orange);
}

.m-pink {
  fill: var(--pink);
}

.m-grey {
  fill: var(--grey);
}

.m-water {
  fill: var(--water);
}

.m-stream {
  stroke: var(--water);
  stroke-width: 8;
}

.m-brook {
  stroke: var(--water);
  stroke-width: 3;
  stroke-opacity: 0.5;
}

.m-road {
  stroke: var(--road);
  stroke-width: 10;
}

.m-roundabout {
  stroke: var(--road);
  stroke-width: 7;
  fill: var(--wood);
}

.m-blue-road {
  stroke: var(--blue-road);
  stroke-width: 12;
}

.m-motor-case {
  stroke: var(--motor-case);
  stroke-width: 14;
}

.m-motor {
  stroke: var(--motor);
  stroke-width: 9;
}

.m-tunnel {
  stroke: var(--tunnel);
  stroke-width: 11;
}

.map-label,
.map-water-label,
.map-city {
  paint-order: stroke;
  stroke: var(--halo);
  stroke-width: 5;
  stroke-linejoin: round;
}

.map-label {
  font-family: "Noto Sans", sans-serif;
  font-size: 42px;
  fill: var(--label);
}

.map-water-label {
  font-family: "Liberation Sans", sans-serif;
  font-size: 40px;
  font-weight: 700;
  fill: var(--water-label);
}

.map-city {
  font-family: "Liberation Sans", sans-serif;
  font-size: 70px;
  font-weight: 700;
  fill: var(--city);
}
```
